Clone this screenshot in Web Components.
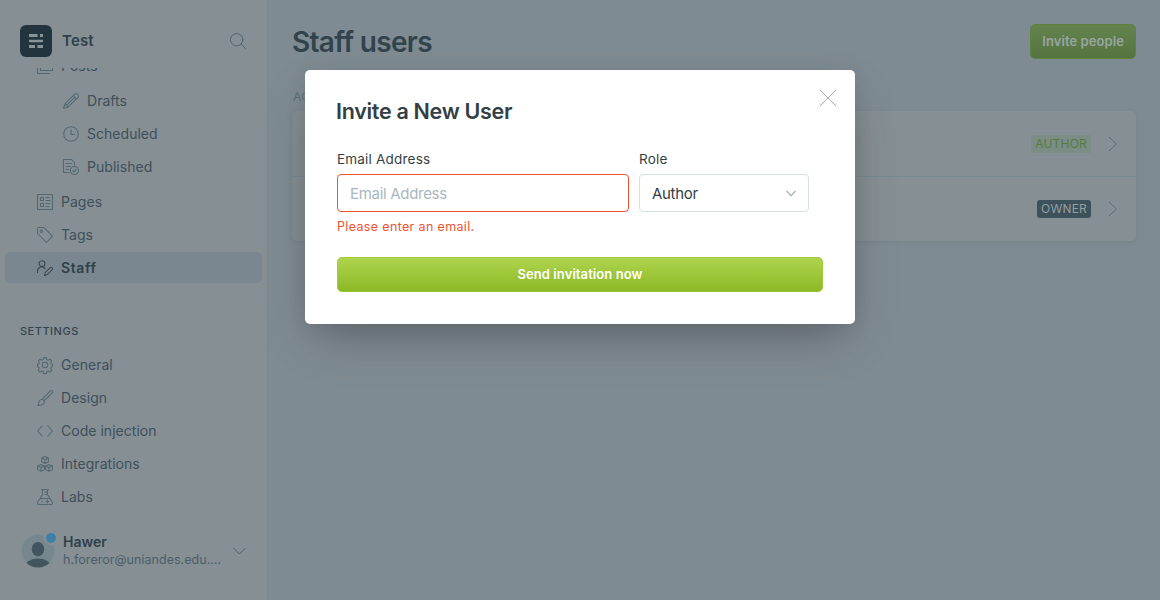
<!DOCTYPE html>
<html lang="en">
<head>
<meta charset="utf-8">
<title>Staff users</title>
<style>
  html, body { margin: 0; height: 100%; overflow: hidden; }
  body { font-family: Inter, "Open Sans", sans-serif; font-size: 14px; color: #3b4c55; background: #7f8b92; }
</style>
</head>
<body>
<admin-app></admin-app>
<script>
const ICONS = {
  posts: '<path d="M3.500.5h12v12h-12zM.5 3.500v12h12"/>',
  pencil: '<path d="M.6 15.400l1.300-4.500L12 .9a1.400 1.400 0 0 1 2 0l1.200 1.200a1.400 1.400 0 0 1 0 2L5 14.200zM1.900 10.900 5 14.200M10.300 2.600l3.200 3.200M3.300 12.600l8.600-8.500"/>',
  clock: '<circle cx="8" cy="8" r="7.300"/><path d="M8 3.500V8.500h3.500"/>',
  published: '<path d="M6.500 13.500h-6V.5h8l3 3V6M3 4.500h5.500M3 7.500h4.500M3 10.500h3"/><circle cx="11.500" cy="11.500" r="4"/><path d="M9.700 11.700l1.200 1.200 2.300-2.700"/>',
  pages: '<path d="M.5.5h15v15H.5zM3.500 3.500h3v3h-3zM3.500 9.500h3v3h-3zM9 3.500h4M9 6.500h4M9 9.500h4M9 12.500h3"/>',
  tag: '<path d="M1.500.5h5.300l8.700 8.700-6 6.300L.5 6.500V1.500a1 1 0 0 1 1-1z"/><circle cx="4.300" cy="4.300" r="1.200"/>',
  staff: '<circle cx="5" cy="3.600" r="2.900"/><path d="M.5 12.500V11A4.300 4.300 0 0 1 8.200 8.600M7.500 15.500l.7-3 5-4.900a1.200 1.200 0 0 1 1.800 0l.2.200a1.200 1.200 0 0 1 0 1.800l-5 5z"/>',
  gear: '<circle cx="8" cy="8" r="2.800"/><path d="M6.700.6h2.600l.5 2 1.300.6 1.900-1.100 1.700 1.800-1 1.800.5 1.300 1.300.5v2l-1.300.7-.5 1.300 1 1.800-1.700 1.800-1.900-1.100-1.300.6-.5 2H6.700l-.5-2-1.300-.6L3 15.100l-1.700-1.800 1-1.800-.5-1.300-1.300-.7v-2l1.300-.5.5-1.300-1-1.800L3 2.100l1.900 1.100 1.300-.6z"/>',
  brush: '<path d="M5.500 9.200 13.300.9a1.300 1.300 0 0 1 2 2L7.100 10.800M5.500 9.200l1.700 1.700c.9 3-1.700 4.700-6.600 4.500 1.600-1 .9-2.300 1.500-4 .5-1.500 1.900-2.300 3.400-2.200z"/>',
  code: '<path d="M5 3 .6 8 5 13M11 3l4.400 5L11 13"/>',
  cubes: '<path d="M8 .6l3.400 1.500v3.700L8 7.400 4.600 5.800V2.100zM4.600 2.100 8 3.700l3.400-1.600M8 3.700v3.600M4.100 8.400l3.400 1.500v3.700l-3.400 1.800-3.500-1.800V9.900zM.6 9.900l3.500 1.600 3.400-1.600M4.100 11.500v3.700M11.900 8.400l3.500 1.500v3.700l-3.500 1.800-3.400-1.800V9.900zM8.500 9.900l3.400 1.600 3.500-1.600M11.900 11.500v3.700"/>',
  flask: '<path d="M4.500.5h7M5.500.5v5L.7 13.300a1.400 1.400 0 0 0 1.200 2.200h12.200a1.400 1.400 0 0 0 1.200-2.200L10.500 5.500v-5M2.900 9.500h10.200M8 3h2.500M8 5.500h2.500M10.500 11v3M9 12.500h3M4.500 13l1-1"/>'
};

const define = (name, html, setup) => {
  const template = document.createElement('template');
  template.innerHTML = html;
  customElements.define(name, class extends HTMLElement {
    constructor() {
      super();
      this.attachShadow({ mode: 'open' }).append(template.content.cloneNode(true));
    }
    connectedCallback() { if (setup) setup(this, this.shadowRoot); }
  });
};

define('line-icon', `
  <style>
    :host { display: block; width: 16px; height: 16px; flex: none; }
    svg { display: block; width: 100%; height: 100%; fill: none; stroke: currentColor; stroke-width: 1.05; stroke-linejoin: round; stroke-linecap: round; overflow: visible; }
  </style>
  <svg viewBox="0 0 16 16"></svg>`,
  (el, root) => { root.querySelector('svg').innerHTML = ICONS[el.getAttribute('name')]; });

define('nav-item', `
  <style>
    :host { display: flex; align-items: center; gap: 8px; box-sizing: border-box; height: 31px; margin: 0 5px 2px; padding-left: 32px; border-radius: 5px; letter-spacing: .03px; line-height: 20px; color: #3e505a; }
    :host([sub]) { padding-left: 58px; }
    line-icon { color: #536871; }
    :host([active]) { background: #7a8790; color: #2e414a; font-weight: 600; letter-spacing: .6px; }
    :host([active]) line-icon { color: #374850; }
  </style>
  <line-icon></line-icon><span><slot></slot></span>`,
  (el, root) => {
    const icon = root.querySelector('line-icon');
    icon.setAttribute('name', el.getAttribute('icon'));
    icon.connectedCallback();
  });

define('site-header', `
  <style>
    :host { display: flex; align-items: center; height: 68px; box-sizing: border-box; padding: 14px 21px 0 20px; }
    .logo { width: 32px; height: 32px; border-radius: 6px; background: #22343e; }
    .name { flex: 1; margin-left: 10px; padding-bottom: 2px; font-size: 15px; font-weight: 600; color: #2f414b; letter-spacing: .15px; }
    .search { width: 16px; height: 16px; fill: none; stroke: #52666f; stroke-width: 1; stroke-linecap: round; }
    svg { display: block; }
  </style>
  <svg class="logo" viewBox="0 0 32 32" fill="#89949a"><path d="M9 9h8.500v3H9zM20 9h3v3h-3zM9 14.700h14v2.600H9zM9 20h6v3H9zM17.500 20H23v3h-5.500z"/></svg>
  <span class="name"><slot></slot></span>
  <svg class="search" viewBox="0 0 16 16"><circle cx="6.700" cy="6.700" r="6.200"/><path d="M11.200 11.200l4.300 4.300"/></svg>`);

define('user-menu', `
  <style>
    :host { display: flex; align-items: center; height: 38px; padding: 0 21px 0 21px; }
    .avatar { position: relative; width: 34px; height: 34px; flex: none; }
    .avatar svg { display: block; }
    .dot { position: absolute; right: -1px; top: -1.500px; width: 10px; height: 10px; border-radius: 50%; background: #3d7fa6; box-shadow: 0 0 0 2px #868f94; }
    .who { flex: 1; margin-left: 8px; line-height: 18px; white-space: nowrap; }
    .name { font-weight: 600; color: #2f414b; }
    .mail { font-size: 12.500px; letter-spacing: .03px; color: #4b5f69; }
    .chev { width: 13px; height: 8px; fill: none; stroke: #4b5f69; }
  </style>
  <span class="avatar">
    <svg width="34" height="34" viewBox="0 0 34 34"><clipPath id="c"><circle cx="17" cy="17" r="16.500"/></clipPath><circle cx="17" cy="17" r="16.500" fill="#76878e" stroke="#7c8e96"/><g clip-path="url(#c)" fill="#42555e"><ellipse cx="17" cy="15.200" rx="6.200" ry="7.200"/><ellipse cx="17" cy="33" rx="13" ry="8.500"/></g></svg>
    <i class="dot"></i>
  </span>
  <div class="who"><div class="name"><slot name="name"></slot></div><div class="mail"><slot name="mail"></slot></div></div>
  <svg class="chev" viewBox="0 0 13 8"><path d="M.5 1l6 6 6-6"/></svg>`);

define('side-bar', `
  <style>
    :host { display: flex; flex-direction: column; width: 267px; flex: none; border-right: 1px solid #7a878e; background: #868f94; }
    .scroll { height: 446px; overflow: hidden; }
    nav { margin-top: -18px; }
    .sub { margin: 4px 0; }
    h4 { margin: 38px 20px 8px; font-size: 11px; font-weight: 500; line-height: 20px; letter-spacing: .5px; color: #33454e; }
    user-menu { margin-top: 18px; }
  </style>
  <site-header>Test</site-header>
  <div class="scroll"><nav>
    <nav-item icon="posts">Posts</nav-item>
    <div class="sub">
      <nav-item sub icon="pencil">Drafts</nav-item>
      <nav-item sub icon="clock">Scheduled</nav-item>
      <nav-item sub icon="published">Published</nav-item>
    </div>
    <nav-item icon="pages">Pages</nav-item>
    <nav-item icon="tag">Tags</nav-item>
    <nav-item icon="staff" active>Staff</nav-item>
    <h4>SETTINGS</h4>
    <nav-item icon="gear">General</nav-item>
    <nav-item icon="brush">Design</nav-item>
    <nav-item icon="code">Code injection</nav-item>
    <nav-item icon="cubes">Integrations</nav-item>
    <nav-item icon="flask">Labs</nav-item>
  </nav></div>
  <user-menu><span slot="name">Hawer</span><span slot="mail">h.foreror@uniandes.edu.…</span></user-menu>`);

define('green-button', `
  <style>
    :host { display: flex; align-items: center; justify-content: center; box-sizing: border-box; height: 35px; padding: 0 11px 1px; border-radius: 5px; font-size: 13px; font-weight: 600; letter-spacing: .08px; white-space: nowrap; color: #fff; border: 1px solid #a0cb3b; border-bottom-color: #96c22f; background: linear-gradient(#afd54f, #8cb824) border-box; }
    :host([dimmed]) { color: #98a5a3; border-color: #5f823f; background: linear-gradient(#64844f, #55733f) border-box; }
  </style><slot></slot>`);

define('user-row', `
  <style>
    :host { display: flex; align-items: center; justify-content: flex-end; height: 65px; padding-right: 18px; }
    :host(:not(:first-of-type)) { border-top: 1px solid #788992; height: 64px; }
    .badge { padding: 0 4px; border-radius: 3px; font-size: 12px; line-height: 18px; letter-spacing: .22px; background: #7c8d85; color: #577a43; }
    :host([owner]) .badge { background: #3c515a; color: #929ea2; letter-spacing: .2px; }
    svg { margin-left: 17px; fill: none; stroke: #586c76; }
  </style>
  <span class="badge"><slot></slot></span>
  <svg width="10" height="16" viewBox="0 0 10 16"><path d="M1 1l7.500 7L1 15"/></svg>`);

define('staff-screen', `
  <style>
    :host { display: block; flex: 1; padding: 24px 24px 0; }
    header { display: flex; justify-content: space-between; height: 35px; align-items: center; }
    h1 { margin: 0; font-size: 28px; font-weight: 600; letter-spacing: -.7px; color: #31434c; }
    h5 { margin: 29px 0 6px 1px; font-size: 12px; line-height: 17px; font-weight: 400; letter-spacing: .3px; color: #5e717a; }
    section { border-radius: 5px; background: #868f94; box-shadow: 0 1px 4px rgba(50,75,85,.12); }
  </style>
  <header><h1>Staff users</h1><green-button dimmed>Invite people</green-button></header>
  <h5>ACTIVE USERS</h5>
  <section><user-row>AUTHOR</user-row><user-row owner>OWNER</user-row></section>`);

define('form-field', `
  <style>
    :host { display: block; }
    label { display: block; font-size: 13.500px; line-height: 20px; letter-spacing: .2px; color: #343f44; }
    .box { display: flex; align-items: center; justify-content: space-between; box-sizing: border-box; height: 38px; margin-top: 5px; padding: 0 12px; border: 1px solid #d3e0e8; border-radius: 4px; font-size: 15px; letter-spacing: -.3px; color: #343f44; }
    :host([invalid]) .box { border-color: #f05230; color: #a9b7c0; }
    .error { height: 20px; margin-top: 5px; font-size: 12.500px; line-height: 20px; letter-spacing: .35px; color: #f05230; }
  </style>
  <label><slot name="label"></slot></label>
  <div class="box"><slot></slot></div>
  <div class="error"><slot name="error"></slot></div>`);

define('invite-modal', `
  <style>
    :host { display: block; box-sizing: border-box; width: 550px; height: 254px; padding: 28px 32px 32px; border-radius: 5px; background: #fff; box-shadow: 0 20px 45px -12px rgba(50,50,50,.46), 0 4px 18px rgba(50,60,65,.1); }
    header { display: flex; justify-content: space-between; margin-right: -14px; }
    h2 { margin: 0 0 0 -1px; font-size: 21.500px; line-height: 27px; font-weight: 600; letter-spacing: -.3px; color: #343f44; }
    .close { margin-top: -9px; fill: none; stroke: #9b9fa2; stroke-width: .9; }
    .fields { display: grid; grid-template-columns: 292px 170px; gap: 10px; margin-top: 24px; }
    green-button { margin-top: 20px; }
  </style>
  <header><h2>Invite a New User</h2><svg class="close" width="18" height="18" viewBox="0 0 18 18"><path d="M1 1l16 16M17 1L1 17"/></svg></header>
  <div class="fields">
    <form-field invalid><span slot="label">Email Address</span><span>Email Address</span><span slot="error">Please enter an email.</span></form-field>
    <form-field><span slot="label">Role</span><span>Author</span><svg width="10" height="7" viewBox="0 0 10 7" fill="none" stroke="#9fb0bb" stroke-width="1.200"><path d="M.5 1 5 5.700 9.500 1"/></svg></form-field>
  </div>
  <green-button>Send invitation now</green-button>`);

define('admin-app', `
  <style>
    :host { display: flex; position: relative; height: 600px; overflow: hidden; background: #7f8b92; }
    .overlay { position: absolute; inset: 0; display: flex; justify-content: center; align-items: flex-start; padding-top: 70px; }
  </style>
  <side-bar></side-bar>
  <staff-screen></staff-screen>
  <div class="overlay"><invite-modal></invite-modal></div>`);
</script>
</body>
</html>
